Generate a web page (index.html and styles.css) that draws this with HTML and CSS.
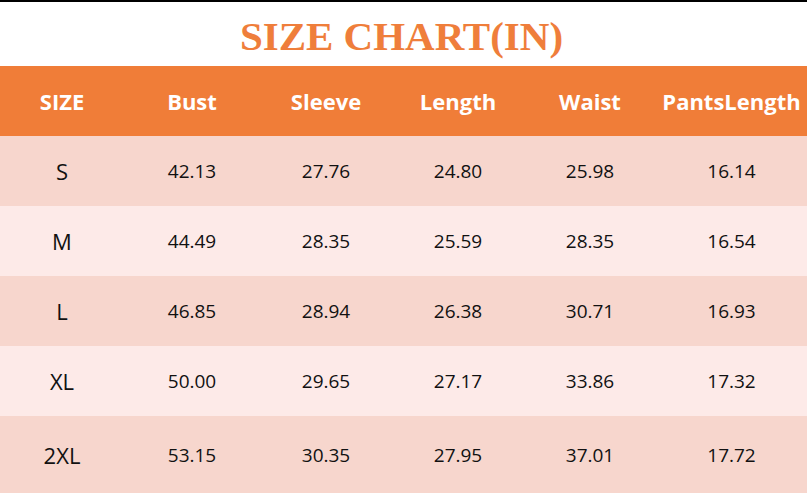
FILE: index.html
```html
<!DOCTYPE html>
<html>
<head>
<meta charset="utf-8">
<link rel="stylesheet" href="styles.css">
</head>
<body>
<div class="page">
  <div class="topbar"></div>
  <h1 class="title">SIZE CHART(IN)</h1>
  <div class="table">
    <div class="row head">
      <div>SIZE</div><div>Bust</div><div>Sleeve</div><div>Length</div><div>Waist</div><div>PantsLength</div>
    </div>
    <div class="row dark">
      <div class="size">S</div><div>42.13</div><div>27.76</div><div>24.80</div><div>25.98</div><div>16.14</div>
    </div>
    <div class="row light">
      <div class="size">M</div><div>44.49</div><div>28.35</div><div>25.59</div><div>28.35</div><div>16.54</div>
    </div>
    <div class="row dark">
      <div class="size">L</div><div>46.85</div><div>28.94</div><div>26.38</div><div>30.71</div><div>16.93</div>
    </div>
    <div class="row light">
      <div class="size">XL</div><div>50.00</div><div>29.65</div><div>27.17</div><div>33.86</div><div>17.32</div>
    </div>
    <div class="row dark last">
      <div class="size">2XL</div><div>53.15</div><div>30.35</div><div>27.95</div><div>37.01</div><div>17.72</div>
    </div>
  </div>
</div>
</body>
</html>
```
FILE: styles.css
```css
* { box-sizing: border-box; }
html, body { margin: 0; padding: 0; background: #fff; }
.page { width: 807px; height: 504px; overflow: hidden; background: #fff; }
.topbar { height: 2px; background: #000; }
.title {
  margin: 0;
  height: 64px;
  display: flex;
  align-items: center;
  justify-content: center;
  font-family: "Liberation Serif", "Times New Roman", serif;
  font-weight: bold;
  font-size: 41px;
  color: #ef7e3b;
  padding-top: 3px;
  padding-right: 4px;
}
.table { display: flex; flex-direction: column; }
.row {
  display: grid;
  grid-template-columns: 124px 136px 132px 132px 132px 151px;
  height: 70px;
  align-items: center;
  font-family: "Open Sans", "Noto Sans", sans-serif;
  font-size: 19px;
  color: #111;
}
.row > div { text-align: center; }
.row.head { background: #f07d38; color: #fff; font-weight: bold; font-size: 22px; }
.row.dark { background: #f7d6cd; }
.row.light { background: #fdeae8; }
.row.last { height: 77px; }
.size { font-size: 22px; }
```
